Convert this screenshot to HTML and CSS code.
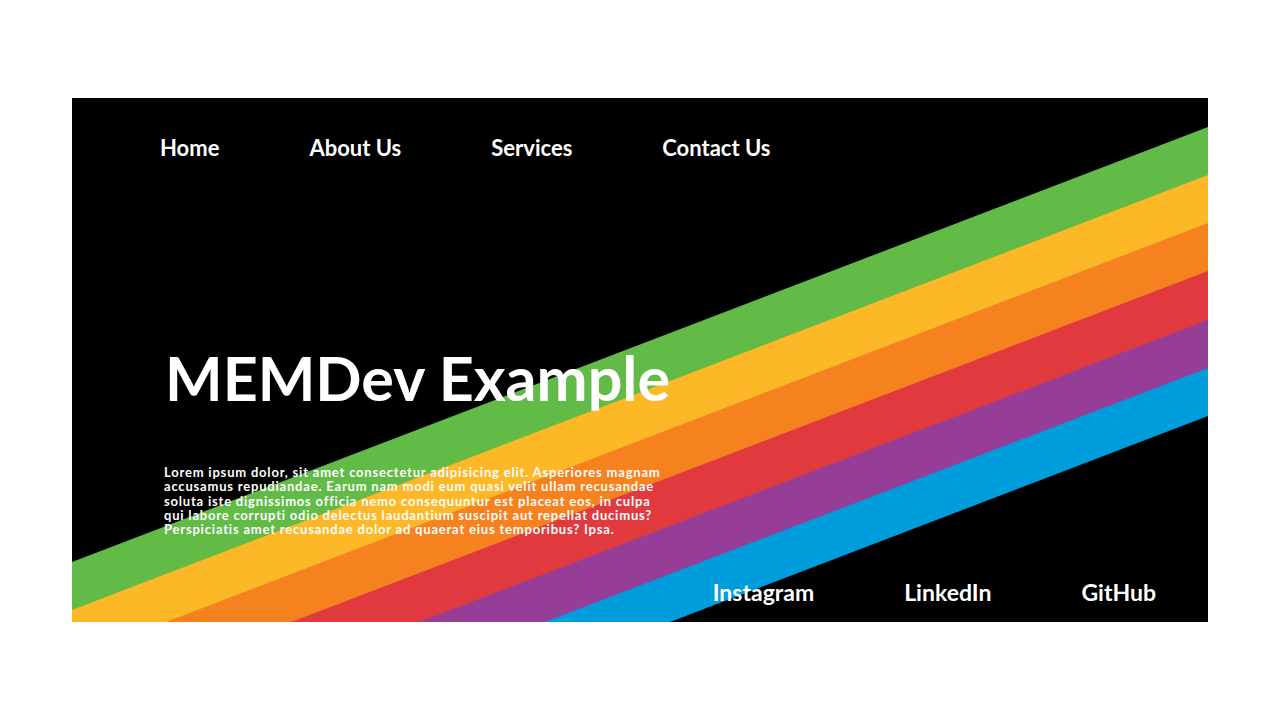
FILE: index.html
```html
<!DOCTYPE html>
<html lang="en">
<head>
<meta charset="utf-8">
<title>MEMDev Example</title>
<link rel="stylesheet" href="styles.css">
</head>
<body>
<main class="hero">
  <svg class="stripes" viewBox="0 0 1136 524" preserveAspectRatio="none" aria-hidden="true">
    <polygon fill="#61bb46" points="0,464 1136,29 1136,79 0,514"/>
    <polygon fill="#fdb827" points="0,512 1136,77 1136,127 0,562"/>
    <polygon fill="#f5821f" points="0,560 1136,125 1136,175 0,610"/>
    <polygon fill="#e03a3e" points="0,608 1136,173 1136,224 0,659"/>
    <polygon fill="#963d97" points="0,657 1136,222 1136,272 0,707"/>
    <polygon fill="#009ddc" points="0,705 1136,270 1136,318 0,753"/>
  </svg>
  <nav class="nav">
    <a href="#">Home</a>
    <a href="#">About Us</a>
    <a href="#">Services</a>
    <a href="#">Contact Us</a>
  </nav>
  <section class="intro">
    <h1 class="title">MEMDev Example</h1>
    <p class="text">Lorem ipsum dolor, sit amet consectetur adipisicing elit. Asperiores magnam accusamus repudiandae. Earum nam modi eum quasi velit ullam recusandae soluta iste dignissimos officia nemo consequuntur est placeat eos, in culpa qui labore corrupti odio delectus laudantium suscipit aut repellat ducimus? Perspiciatis amet recusandae dolor ad quaerat eius temporibus? Ipsa.</p>
  </section>
  <footer class="social">
    <a href="#">Instagram</a>
    <a href="#">LinkedIn</a>
    <a href="#">GitHub</a>
  </footer>
</main>
</body>
</html>
```
FILE: styles.css
```css
html, body {
  margin: 0;
  padding: 0;
}
body {
  width: 1280px;
  height: 720px;
  background: #fff;
  display: flex;
  align-items: center;
  justify-content: center;
  font-family: "Lato", "Noto Sans", sans-serif;
}
.hero {
  position: relative;
  width: 1136px;
  height: 524px;
  background: #000;
  overflow: hidden;
  display: flex;
  flex-direction: column;
  color: #fff;
}
.stripes {
  position: absolute;
  inset: 0;
  width: 100%;
  height: 100%;
  z-index: 0;
}
.nav, .intro, .social {
  position: relative;
  z-index: 1;
}
.nav {
  display: flex;
  gap: 90px;
  padding: 36px 0 0 88px;
}
.nav a, .social a {
  color: #fff;
  text-decoration: none;
  font-weight: 700;
  font-size: 22px;
  line-height: 28px;
}
.social a {
  font-size: 23px;
}
.intro {
  padding-left: 93px;
  margin-top: 181px;
  width: 530px;
}
.title {
  margin: 0;
  font-size: 61px;
  line-height: 70px;
  font-weight: 700;
}
.text {
  margin: 52px 0 0 -1px;
  font-size: 13px;
  line-height: 14.3px;
  font-weight: 700;
  letter-spacing: 0.8px;
  width: 500px;
  color: #fdfdfd;
}
.social {
  margin-top: auto;
  display: flex;
  justify-content: flex-end;
  gap: 90px;
  padding: 0 52px 16px 0;
}
```
